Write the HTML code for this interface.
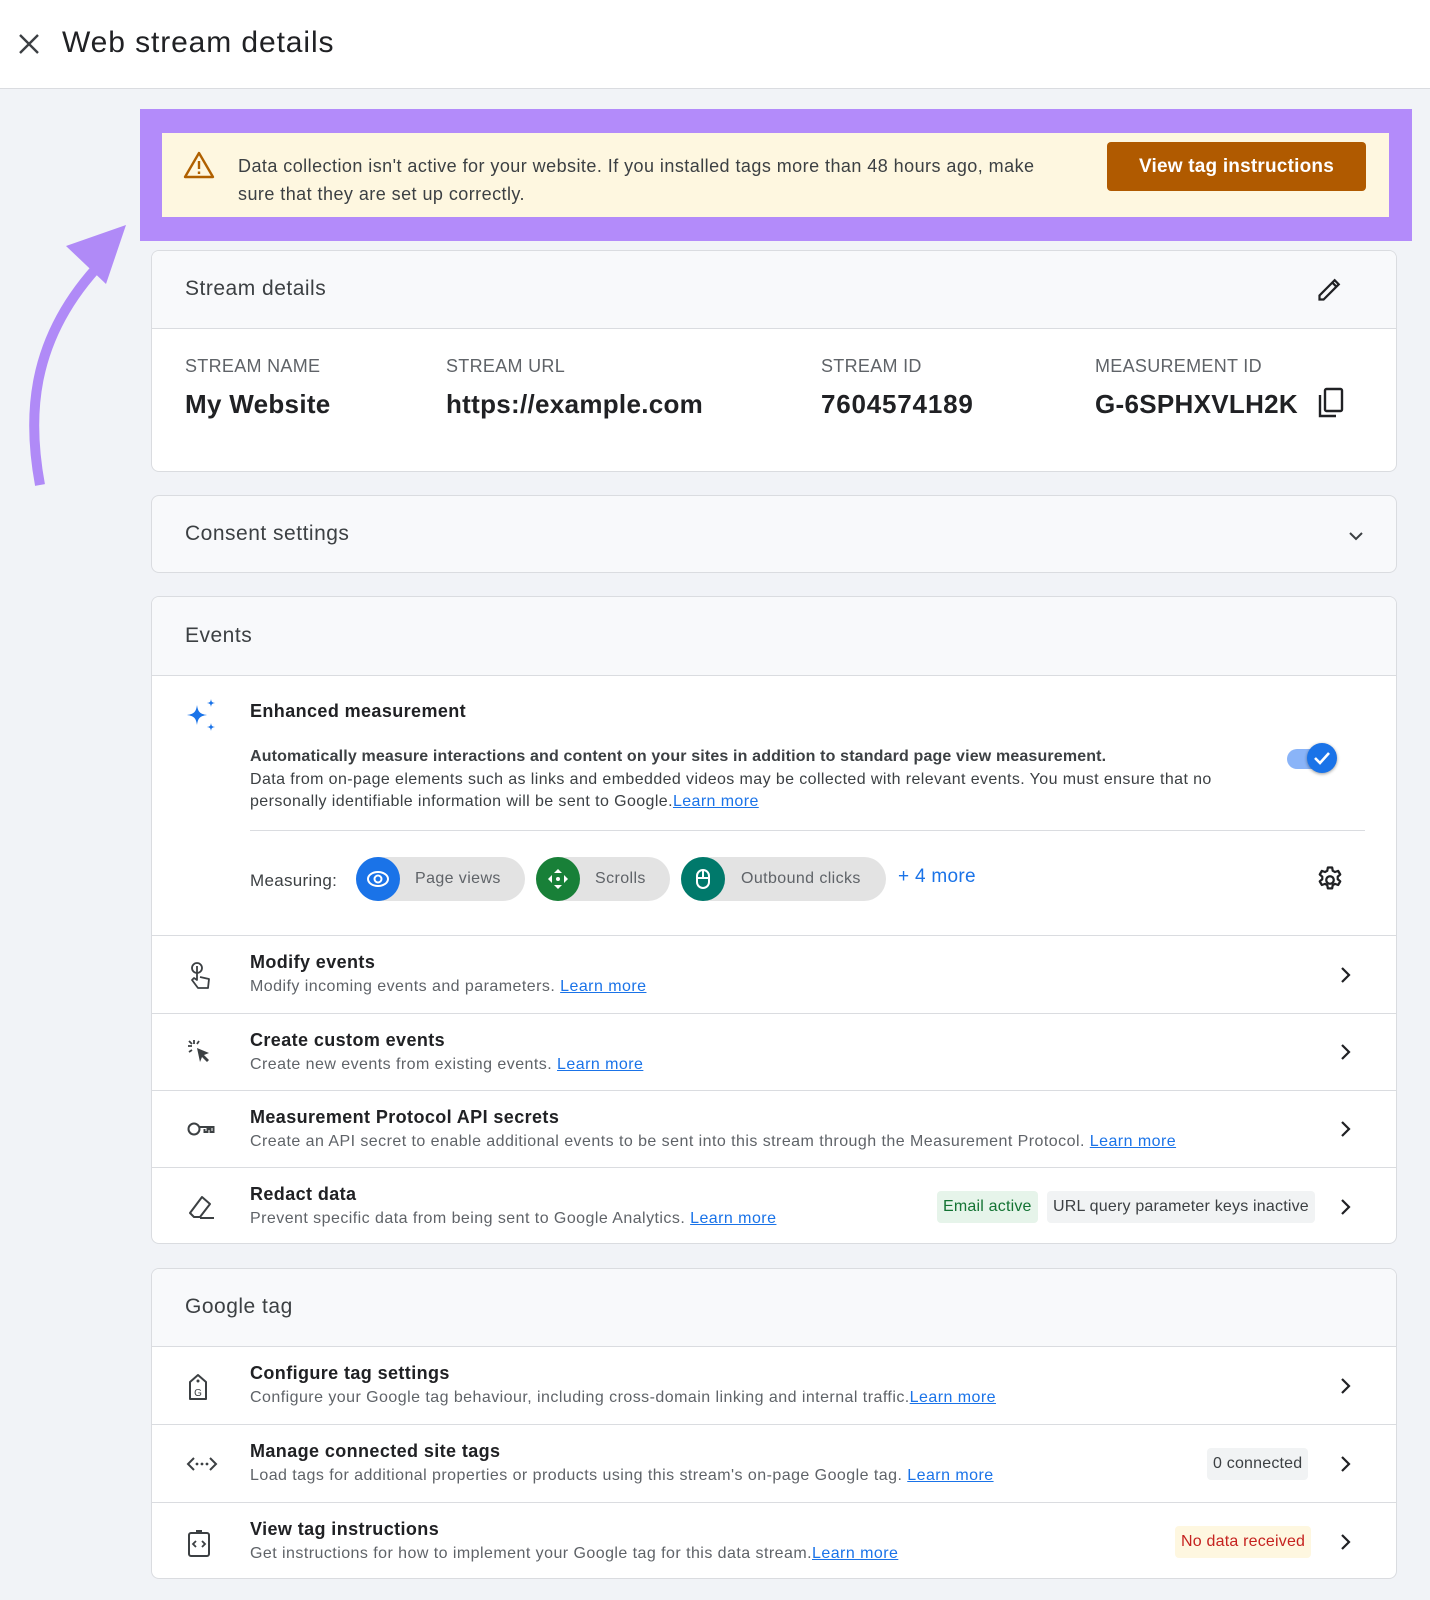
<!DOCTYPE html>
<html><head><meta charset="utf-8"><style>
*{margin:0;padding:0;box-sizing:border-box}
body{width:1430px;height:1600px;background:#f1f3f7;font-family:"Liberation Sans",sans-serif;color:#202124;position:relative;overflow:hidden}
.abs{position:absolute}
.hdr{left:0;top:0;width:1430px;height:89px;background:#fff;border-bottom:1px solid #dadce0}
.card{position:absolute;left:151px;width:1246px;background:#fff;border:1px solid #dadce0;border-radius:8px;overflow:hidden}
.ch{background:#f8f9fb;border-bottom:1px solid #dadce0;position:absolute;left:0;top:0;width:100%}
.ct{position:absolute;left:33px;font-size:21px;color:#3c4043;letter-spacing:.5px}
.lbl{font-size:18px;color:#5f6368;position:absolute;letter-spacing:.3px}
.val{font-size:26px;font-weight:bold;color:#202124;position:absolute;letter-spacing:.3px}
.row{position:absolute;left:0;width:100%;border-top:1px solid #dadce0}
.rt{position:absolute;left:98px;top:16px;font-size:18px;font-weight:bold;color:#202124;letter-spacing:.4px}
.rs{position:absolute;left:98px;top:42px;font-size:16px;color:#5f6368;white-space:nowrap;letter-spacing:.45px}
a{color:#1a73e8;text-decoration:underline}
.chev{position:absolute;right:44px;top:50%;margin-top:-9px}
.ic{position:absolute;left:34px;top:50%;margin-top:-14px}
.chip{position:absolute;height:44px;border-radius:22px;background:#e3e3e3;font-size:16px;color:#5f6368;line-height:44px;letter-spacing:.4px}
.chip i{position:absolute;left:0;top:0;width:44px;height:44px;border-radius:22px}
.badge{position:absolute;top:50%;margin-top:-16px;height:32px;line-height:32px;font-size:16px;padding:0 6px;border-radius:4px;letter-spacing:.2px}
</style></head><body>
<div class="abs hdr">
<svg class="abs" style="left:18px;top:33px" width="22" height="22" viewBox="0 0 22 22"><path d="M2 2L20 20M20 2L2 20" stroke="#3c4043" stroke-width="2.4"/></svg>
<div class="abs" style="left:62px;top:26px;font-size:30px;color:#202124;letter-spacing:.9px">Web stream details</div>
</div>

<svg class="abs" style="left:0;top:215px" width="140" height="280" viewBox="0 215 140 280"><path d="M40 485 C 28 420, 28 340, 102 262" stroke="#b08af7" stroke-width="10" fill="none"/><polygon points="66,246 126,225 106,284" fill="#b08af7"/></svg>

<div class="abs" style="left:140px;top:109px;width:1272px;height:132px;background:#b38bfa"></div>
<div class="abs" style="left:162px;top:133px;width:1227px;height:84px;background:#fef7e0"></div>
<svg class="abs" style="left:183px;top:151px" width="32" height="28" viewBox="0 0 32 28"><path d="M16 2L30 26H2Z" fill="none" stroke="#b06000" stroke-width="2.4" stroke-linejoin="round"/><path d="M16 10v8M16 20.5v2.5" stroke="#b06000" stroke-width="2.4"/></svg>
<div class="abs" style="left:238px;top:152px;font-size:18px;line-height:28px;color:#3c4043;width:840px;letter-spacing:.45px">Data collection isn't active for your website. If you installed tags more than 48 hours ago, make<br>sure that they are set up correctly.</div>
<div class="abs" style="left:1107px;top:142px;width:259px;height:49px;background:#b05a00;border-radius:4px;color:#fff;font-size:19px;line-height:49px;text-align:center;font-weight:bold;letter-spacing:.2px">View tag instructions</div>

<div class="card" style="top:250px;height:222px">
<div class="ch" style="height:78px"></div>
<div class="ct" style="top:26px">Stream details</div>
<svg class="abs" style="right:52px;top:24px" width="28" height="28" viewBox="0 0 24 24"><path d="M3 21v-3.5L16 4.5l3.5 3.5L6.5 21zM14 6.5l3.5 3.5" fill="none" stroke="#202124" stroke-width="1.9"/></svg>
<div class="lbl" style="left:33px;top:105px">STREAM NAME</div>
<div class="lbl" style="left:294px;top:105px">STREAM URL</div>
<div class="lbl" style="left:669px;top:105px">STREAM ID</div>
<div class="lbl" style="left:943px;top:105px">MEASUREMENT ID</div>
<div class="val" style="left:33px;top:138px">My Website</div>
<div class="val" style="left:294px;top:138px">https://example.com</div>
<div class="val" style="left:669px;top:138px;letter-spacing:.8px">7604574189</div>
<div class="val" style="left:943px;top:138px">G-6SPHXVLH2K</div>
<svg class="abs" style="left:1165px;top:136px" width="28" height="32" viewBox="0 0 28 32"><rect x="8" y="2" width="17" height="22" rx="1.5" fill="none" stroke="#202124" stroke-width="2.4"/><path d="M3 8v21h16" fill="none" stroke="#202124" stroke-width="2.4"/></svg>
</div>

<div class="card" style="top:495px;height:78px;background:#f8f9fb">
<div class="ct" style="top:26px">Consent settings</div>
<svg class="abs" style="right:32px;top:34px" width="16" height="12" viewBox="0 0 16 12"><path d="M2 3l6 6 6-6" fill="none" stroke="#3c4043" stroke-width="2"/></svg>
</div>

<div class="card" style="top:596px;height:648px">
<div class="ch" style="height:79px"></div>
<div class="ct" style="top:27px">Events</div>
<svg class="abs" style="left:33px;top:102px" width="34" height="34" viewBox="0 0 34 34"><path d="M12 6C13 13 15 15 22 16 15 17 13 19 12 26 11 19 9 17 2 16 9 15 11 13 12 6Z" fill="#1a73e8"/><path d="M26 0C26.5 3 27 3.5 30 4 27 4.5 26.5 5 26 8 25.5 5 25 4.5 22 4 25 3.5 25.5 3 26 0Z" fill="#1a73e8"/><path d="M26 24C26.5 27 27 27.5 30 28 27 28.5 26.5 29 26 32 25.5 29 25 28.5 22 28 25 27.5 25.5 27 26 24Z" fill="#1a73e8"/></svg>
<div class="abs" style="left:98px;top:104px;font-size:18px;font-weight:bold;letter-spacing:.4px">Enhanced measurement</div>
<div class="abs" style="left:98px;top:151px;font-size:16px;font-weight:bold;color:#3c4043;letter-spacing:.15px">Automatically measure interactions and content on your sites in addition to standard page view measurement.</div>
<div class="abs" style="left:98px;top:172px;font-size:16px;line-height:22px;color:#3c4043;width:1000px;letter-spacing:.4px">Data from on-page elements such as links and embedded videos may be collected with relevant events. You must ensure that no<br>personally identifiable information will be sent to Google.<a>Learn more</a></div>
<div class="abs" style="left:1135px;top:152px;width:44px;height:20px;border-radius:10px;background:#8ab4f8"></div>
<div class="abs" style="left:1155px;top:146px;width:30px;height:30px;border-radius:15px;background:#1a73e8;box-shadow:0 1px 3px rgba(0,0,0,.4)"><svg width="30" height="30" viewBox="0 0 30 30"><path d="M8 15l5 5 9-10" fill="none" stroke="#fff" stroke-width="2.6"/></svg></div>
<div class="abs" style="left:98px;top:233px;width:1115px;height:1px;background:#dadce0"></div>
<div class="abs" style="left:98px;top:274px;font-size:17px;color:#3c4043;letter-spacing:.3px">Measuring:</div>
<div class="chip" style="left:204px;top:260px;width:169px"><i style="background:#1a73e8"><svg width="44" height="44" viewBox="0 0 44 44"><ellipse cx="22" cy="22" rx="10" ry="7" fill="none" stroke="#fff" stroke-width="2"/><circle cx="22" cy="22" r="3.5" fill="none" stroke="#fff" stroke-width="2"/></svg></i><span style="position:absolute;left:59px">Page views</span></div>
<div class="chip" style="left:384px;top:260px;width:134px"><i style="background:#188038"><svg width="44" height="44" viewBox="0 0 44 44"><path d="M22 12l4 4h-8zM22 32l4-4h-8zM12 22l4-4v8zM32 22l-4-4v8z" fill="#fff"/><circle cx="22" cy="22" r="2" fill="#fff"/></svg></i><span style="position:absolute;left:59px">Scrolls</span></div>
<div class="chip" style="left:529px;top:260px;width:205px"><i style="background:#00796b"><svg width="44" height="44" viewBox="0 0 44 44"><rect x="16" y="13" width="12" height="18" rx="6" fill="none" stroke="#fff" stroke-width="2"/><path d="M22 14v6M16 21h12" stroke="#fff" stroke-width="2"/></svg></i><span style="position:absolute;left:60px">Outbound clicks</span></div>
<div class="abs" style="left:746px;top:269px;font-size:19px;color:#1a73e8;letter-spacing:.3px">+ 4 more</div>
<svg class="abs" style="left:1163px;top:268px" width="30" height="30" viewBox="0 0 24 24"><path d="M10.3 2h3.4l.5 2.6 1.8 1 2.5-.9 1.7 2.9-2 1.7v2.1l2 1.7-1.7 2.9-2.5-.9-1.8 1-.5 2.6h-3.4l-.5-2.6-1.8-1-2.5.9-1.7-2.9 2-1.7V9.3l-2-1.7 1.7-2.9 2.5.9 1.8-1z" fill="none" stroke="#202124" stroke-width="1.8" stroke-linejoin="round"/><circle cx="12" cy="12" r="3" fill="none" stroke="#202124" stroke-width="1.8"/></svg>

<div class="row" style="top:338px;height:78px">
<svg class="ic" width="28" height="30" viewBox="0 0 28 30"><circle cx="11" cy="7" r="5" fill="none" stroke="#3c4043" stroke-width="1.8"/><path d="M11 5v14l-3-2-2 2 6 8h10l1-9-9-2" fill="none" stroke="#3c4043" stroke-width="1.8" stroke-linejoin="round"/></svg>
<div class="rt">Modify events</div><div class="rs">Modify incoming events and parameters. <a>Learn more</a></div>
<svg class="chev" width="12" height="18" viewBox="0 0 12 18"><path d="M2 2l7 7-7 7" fill="none" stroke="#202124" stroke-width="2.2"/></svg></div>
<div class="row" style="top:416px;height:77px">
<svg class="ic" width="28" height="28" viewBox="0 0 28 28"><path d="M11 10l3 14 2-5 5 5 2-2-5-5 5-2z" fill="#3c4043"/><path d="M8 2v4M2 8h4M3 3l3 3M3 14l3-2M13 3l-2 3" stroke="#3c4043" stroke-width="1.8"/></svg>
<div class="rt">Create custom events</div><div class="rs">Create new events from existing events. <a>Learn more</a></div>
<svg class="chev" width="12" height="18" viewBox="0 0 12 18"><path d="M2 2l7 7-7 7" fill="none" stroke="#202124" stroke-width="2.2"/></svg></div>
<div class="row" style="top:493px;height:77px">
<svg class="ic" width="30" height="28" viewBox="0 0 30 28"><circle cx="8" cy="14" r="5.5" fill="none" stroke="#3c4043" stroke-width="2"/><path d="M13.5 12h14v5h-3v-3h-3v3h-3v-3" fill="none" stroke="#3c4043" stroke-width="2"/></svg>
<div class="rt">Measurement Protocol API secrets</div><div class="rs">Create an API secret to enable additional events to be sent into this stream through the Measurement Protocol. <a>Learn more</a></div>
<svg class="chev" width="12" height="18" viewBox="0 0 12 18"><path d="M2 2l7 7-7 7" fill="none" stroke="#202124" stroke-width="2.2"/></svg></div>
<div class="row" style="top:570px;height:78px">
<svg class="ic" width="30" height="28" viewBox="0 0 30 28"><path d="M4 20L16 4l8 7-10 13H8z" fill="none" stroke="#3c4043" stroke-width="2" stroke-linejoin="round"/><path d="M14 25h14" stroke="#3c4043" stroke-width="2"/></svg>
<div class="rt">Redact data</div><div class="rs">Prevent specific data from being sent to Google Analytics. <a>Learn more</a></div>
<div class="badge" style="left:785px;background:#e6f4ea;color:#137333">Email active</div>
<div class="badge" style="left:895px;background:#f1f3f4;color:#3c4043">URL query parameter keys inactive</div>
<svg class="chev" width="12" height="18" viewBox="0 0 12 18"><path d="M2 2l7 7-7 7" fill="none" stroke="#202124" stroke-width="2.2"/></svg></div>
</div>

<div class="card" style="top:1268px;height:311px">
<div class="ch" style="height:78px"></div>
<div class="ct" style="top:26px">Google tag</div>
<div class="row" style="top:77px;height:78px">
<svg class="ic" width="24" height="30" viewBox="0 0 24 30"><path d="M4 10l8-7 8 7v17H4z" fill="none" stroke="#3c4043" stroke-width="2" stroke-linejoin="round"/><circle cx="12" cy="9" r="1.5" fill="#3c4043"/><text x="12" y="24" font-size="10" text-anchor="middle" fill="#3c4043" font-family="Liberation Sans">G</text></svg>
<div class="rt">Configure tag settings</div><div class="rs">Configure your Google tag behaviour, including cross-domain linking and internal traffic.<a>Learn more</a></div>
<svg class="chev" width="12" height="18" viewBox="0 0 12 18"><path d="M2 2l7 7-7 7" fill="none" stroke="#202124" stroke-width="2.2"/></svg></div>
<div class="row" style="top:155px;height:78px">
<svg class="ic" width="32" height="28" viewBox="0 0 32 28"><path d="M8 8l-6 6 6 6M24 8l6 6-6 6" fill="none" stroke="#3c4043" stroke-width="2"/><circle cx="11" cy="14" r="1.4" fill="#3c4043"/><circle cx="16" cy="14" r="1.4" fill="#3c4043"/><circle cx="21" cy="14" r="1.4" fill="#3c4043"/></svg>
<div class="rt">Manage connected site tags</div><div class="rs">Load tags for additional properties or products using this stream's on-page Google tag. <a>Learn more</a></div>
<div class="badge" style="left:1055px;background:#f1f3f4;color:#3c4043">0 connected</div>
<svg class="chev" width="12" height="18" viewBox="0 0 12 18"><path d="M2 2l7 7-7 7" fill="none" stroke="#202124" stroke-width="2.2"/></svg></div>
<div class="row" style="top:233px;height:78px">
<svg class="ic" width="26" height="30" viewBox="0 0 26 30"><rect x="3" y="5" width="20" height="23" rx="2" fill="none" stroke="#3c4043" stroke-width="2"/><path d="M10 2h6v4h-6z" fill="#3c4043"/><path d="M10 13l-3 3 3 3M16 13l3 3-3 3" fill="none" stroke="#3c4043" stroke-width="1.8"/></svg>
<div class="rt">View tag instructions</div><div class="rs">Get instructions for how to implement your Google tag for this data stream.<a>Learn more</a></div>
<div class="badge" style="left:1023px;background:#fef7e0;color:#c5221f">No data received</div>
<svg class="chev" width="12" height="18" viewBox="0 0 12 18"><path d="M2 2l7 7-7 7" fill="none" stroke="#202124" stroke-width="2.2"/></svg></div>
</div>
</body></html>
